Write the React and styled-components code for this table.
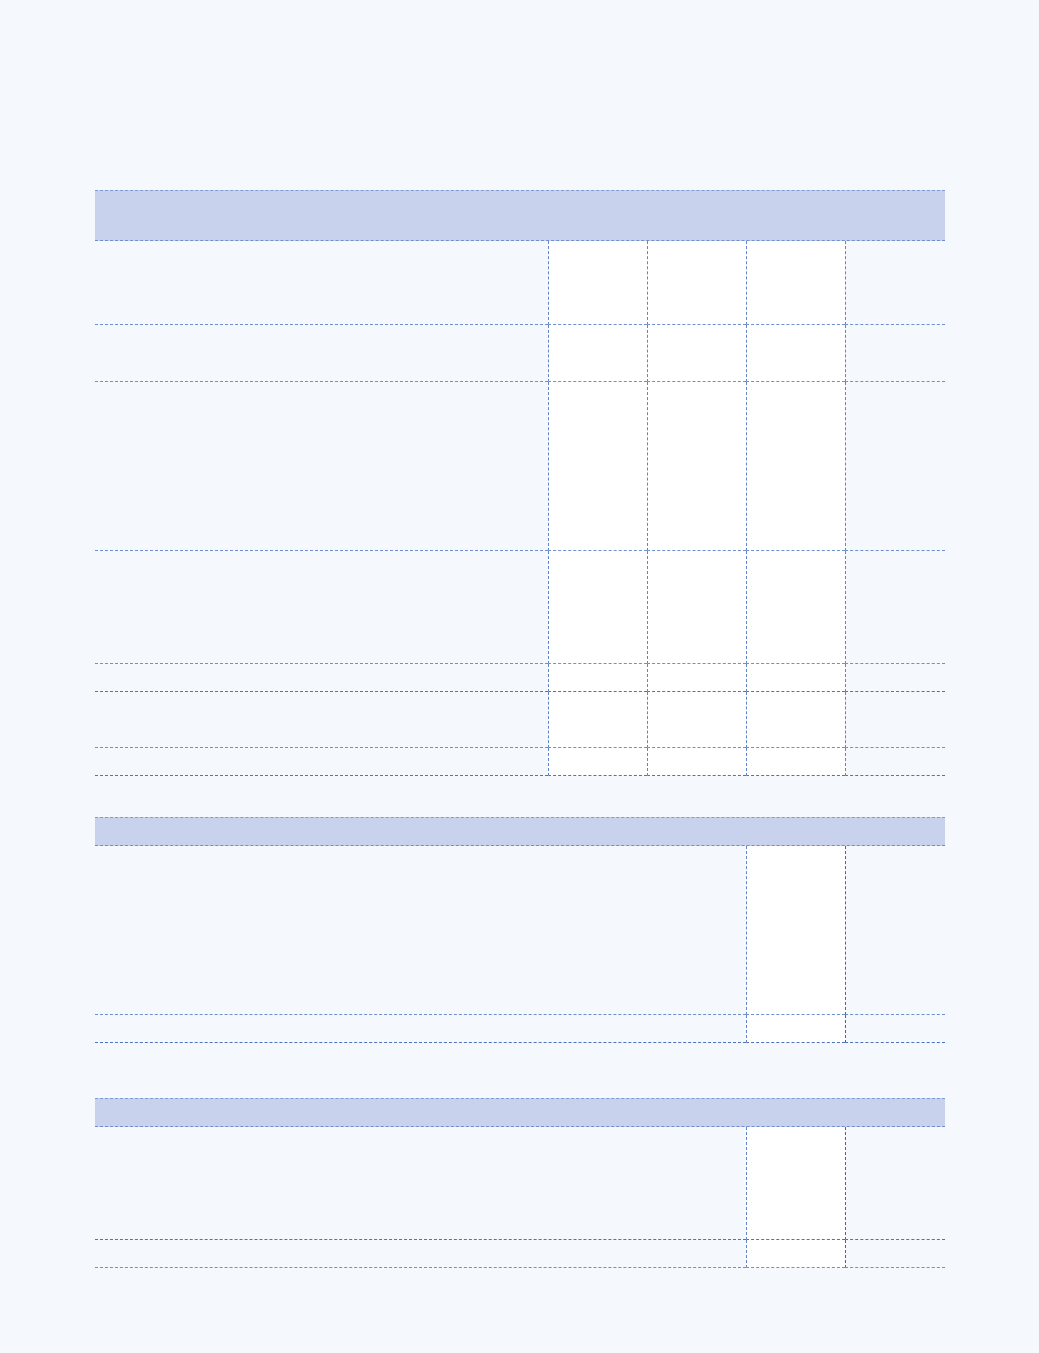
import React from "react";
import styled, { createGlobalStyle } from "styled-components";

const Global = createGlobalStyle`
  html, body {
    margin: 0;
    background: #f5f9fe;
    font-family: "Liberation Sans", Arial, sans-serif;
  }
`;

const Page = styled.div`
  padding: 190px 94px 80px 95px;
  min-height: 1353px;
  box-sizing: border-box;
`;

const Table = styled.div`
  width: 850px;
  margin-top: ${(p) => p.$gap || 0}px;
`;

const Head = styled.div`
  height: ${(p) => p.$h}px;
  box-sizing: border-box;
  background: #c8d2ec;
  border-top: 1px dashed #7f9bd2;
  border-bottom: 1px dashed #6f8fcf;
`;

const Row = styled.div`
  display: grid;
  grid-template-columns: ${(p) => p.$cols};
  height: ${(p) => p.$h}px;
`;

const Cell = styled.div`
  box-sizing: border-box;
  background: ${(p) => (p.$white ? "#ffffff" : "transparent")};
  border-left: ${(p) =>
    p.$first ? "none" : `1px dashed ${p.$grey ? "#4d6596" : "#5f84c9"}`};
  border-bottom: 1px dashed ${(p) => (p.$dark ? "#4f72b8" : "#6f8fcf")};
`;

const wide = "453px 99px 99px 99px 1fr";
const narrow = "651px 99px 1fr";

const WideRow = ({ h, dark }) => (
  <Row $cols={wide} $h={h}>
    <Cell $first $dark={dark} />
    <Cell $white $dark={dark} />
    <Cell $white $dark={dark} />
    <Cell $white $dark={dark} />
    <Cell $dark={dark} />
  </Row>
);

const NarrowRow = ({ h, dark }) => (
  <Row $cols={narrow} $h={h}>
    <Cell $first $dark={dark} />
    <Cell $white $dark={dark} />
    <Cell $grey $dark={dark} />
  </Row>
);

export default function App() {
  return (
    <>
      <Global />
      <Page>
        <Table>
          <Head $h={51} />
          {[84, 57, 169, 113, 28, 56, 28].map((h, i) => (
            <WideRow key={i} h={h} dark={i === 4 || i === 6} />
          ))}
        </Table>
        <Table $gap={41}>
          <Head $h={29} />
          <NarrowRow h={169} />
          <NarrowRow h={28} dark />
        </Table>
        <Table $gap={55}>
          <Head $h={29} />
          <NarrowRow h={113} dark />
          <NarrowRow h={28} />
        </Table>
      </Page>
    </>
  );
}
